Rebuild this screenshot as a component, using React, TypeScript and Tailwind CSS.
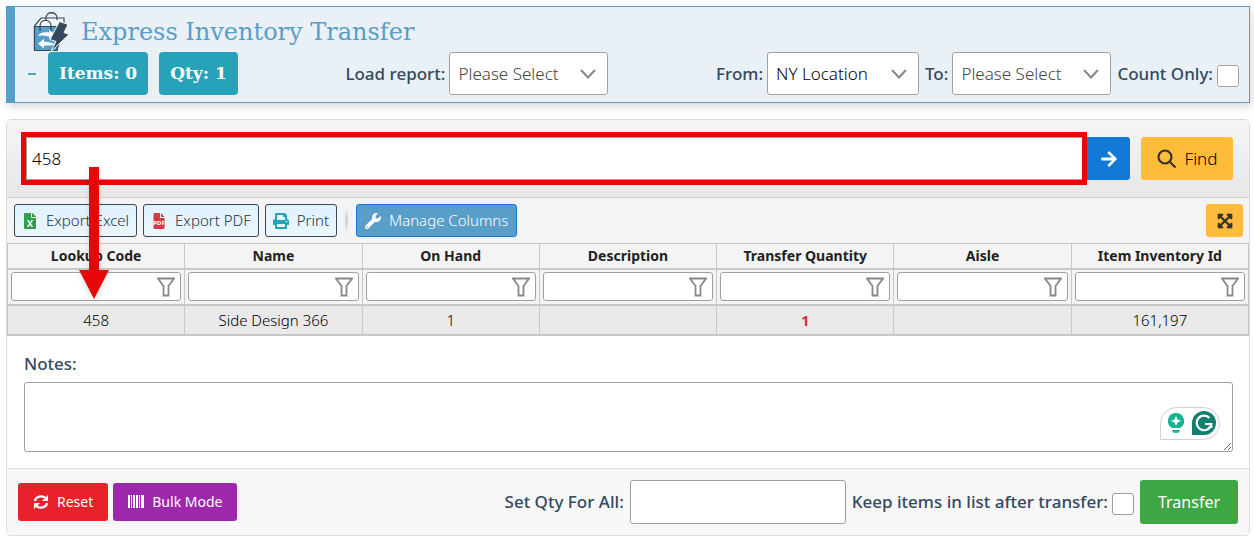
import { useState } from "react";
import type { ReactNode } from "react";
import { FaArrowRight, FaPrint, FaWrench, FaFileExcel, FaExpandArrowsAlt } from "react-icons/fa";

const LABEL = "text-[17px] leading-6 font-medium text-[#34495e]";
const FIELD = "rounded-[3px] border border-[#a0a0a0] bg-white";
const SLAB = "font-['DejaVu_Serif',serif]";

function Select({ id, label, options, width, muted }: { id: string; label: string; options: string[]; width: string; muted?: boolean }) {
  return (
    <div className="flex items-center gap-1">
      <label htmlFor={id} className={LABEL}>{label}</label>
      <div className={`grid items-center ${width}`}>
        <select
          id={id}
          className={`col-start-1 row-start-1 h-[43px] w-full appearance-none pl-2 text-[17px] font-light ${FIELD} ${muted ? "text-[#444]" : "text-black"}`}
        >
          {options.map((o) => (
            <option key={o}>{o}</option>
          ))}
        </select>
        <svg className="pointer-events-none col-start-1 row-start-1 mr-3 h-4 w-4 justify-self-end" viewBox="0 0 16 16" fill="none" stroke="#888" strokeWidth="2">
          <path d="M1 4l7 7.500 7-7.500" />
        </svg>
      </div>
    </div>
  );
}

function Check({ id, label }: { id: string; label: string }) {
  return (
    <div className="flex items-center gap-1">
      <label htmlFor={id} className={LABEL}>{label}</label>
      <input id={id} type="checkbox" className={`mt-1 h-[22px] w-[22px] appearance-none checked:bg-[#1279d6] ${FIELD}`} />
    </div>
  );
}

function ToolButton({ children }: { children: ReactNode }) {
  return (
    <button className="flex h-[33px] items-center gap-2 rounded-[3px] border border-[#34495e] bg-linear-to-b from-[#e0f2ff] to-[#ecf6fd] px-[7px] text-[15px] font-light text-[#1f3347]">
      {children}
    </button>
  );
}

function BagIcon() {
  return (
    <svg className="h-10 w-9" viewBox="0 0 36 40">
      <path d="M1.500 14L8 6H31V16L24 38H1.500Z" fill="#f4f7fa" stroke="#34495e" strokeWidth="1.200" />
      <path d="M1.500 14.500H24V38.500H1.500Z" fill="#579ec9" stroke="#34495e" strokeWidth="1.200" />
      <path d="M13 8V6C13 -1 24 -1 24 6V8M7 19V14C7 6.500 18 6.500 18 14V19" fill="none" stroke="#34495e" strokeWidth="1.300" />
      <path d="M5 24C7 20.500 11 20 16 20.500V17.500L22 22.500 16 27V24.500C11 23.500 8 23 5 24Z" fill="#fff" />
      <path d="M22 32C19 34 16 33.500 11 33.500V36.500L5 31.500 11 27V29.500C16 30 19 31 22 32Z" fill="#fff" />
      <path d="M26.500 9.500L35 12.500 31 20.500 36 22.500 18 39.500 23 29.500 17 27.500Z" fill="#34495e" stroke="#f7f5e6" strokeWidth="1" />
    </svg>
  );
}

function PdfIcon() {
  return (
    <svg className="h-4 w-4" viewBox="0 0 16 16">
      <path d="M2.500 1.500Q2.500 0 4 0H9V5H13.500V14.500Q13.500 16 12 16H4Q2.500 16 2.500 14.500ZM10 0L13.500 4H10Z" fill="#dc3545" />
      <text x="8" y="12" textAnchor="middle" fontSize="6" fontWeight="bold" fill="#fff">PDF</text>
    </svg>
  );
}

function SyncIcon() {
  return (
    <svg className="h-4 w-4" viewBox="0 0 16 16" fill="none">
      <path d="M2 7C2.500 2.500 9.500 0.800 12.800 4.300M14 9C13.500 13.500 6.500 15.200 3.200 11.700" stroke="#fff" strokeWidth="2.300" />
      <path d="M15 1V7H9ZM1 15V9H7Z" fill="#fff" />
    </svg>
  );
}

function BarcodeIcon() {
  return (
    <svg className="h-4 w-4" viewBox="0 0 16 16" fill="#fff" shapeRendering="crispEdges">
      <path d="M0 1H2V14H0ZM3 1H4V14H3ZM5 1H7V14H5ZM8 1H10V14H8ZM11 1H12V14H11ZM13 1H16V14H13Z" />
    </svg>
  );
}

const columns = ["Lookup Code", "Name", "On Hand", "Description", "Transfer Quantity", "Aisle", "Item Inventory Id"];
const row = ["458", "Side Design 366", "1", "", "1", "", "161,197"];

export default function App() {
  const [code, setCode] = useState("458");
  return (
    <main className="min-h-screen bg-white px-1.5 py-1.5 pr-1 font-['Noto_Sans','Open_Sans',sans-serif] text-[#222]">
      <header className="border border-l-9 border-[#579ec9] bg-[#e9f0f6] pr-2.5 pb-[7px] pl-3 shadow-[2px_4px_8px_rgba(0,0,0,0.15)]">
        <div className="flex h-[45px] items-center gap-3 pt-1 pl-1.5">
          <BagIcon />
          <h1 className={`${SLAB} text-2xl text-[#579ec9]`}>Express Inventory Transfer</h1>
        </div>
        <div className="flex h-[43px] items-center justify-between">
          <div className={`flex items-center gap-[11px] text-[17px] font-bold text-white ${SLAB}`}>
            <button aria-label="Collapse" className="flex h-6 w-[10px] items-center justify-center">
              <span className="h-0.5 w-2 bg-[#579ec9]" />
            </button>
            <span className="flex h-[43px] items-center rounded-[4px] bg-[#28a2b8] px-[11px]">Items: 0</span>
            <span className="flex h-[43px] items-center rounded-[4px] bg-[#28a2b8] px-[11px]">Qty: 1</span>
          </div>
          <Select id="report" label="Load report:" options={["Please Select"]} width="w-[159px]" muted />
          <div className="flex items-center gap-1.5">
            <Select id="from" label="From:" options={["NY Location"]} width="w-[152px]" />
            <Select id="to" label="To:" options={["Please Select"]} width="w-[159px]" muted />
            <Check id="count" label="Count Only:" />
          </div>
        </div>
      </header>

      <section className="relative mt-4 overflow-hidden rounded-[5px] border border-[#dcdcdc]">
        <div className="flex items-center bg-linear-to-b from-[#f5f5f5] to-[#e7e7e7] py-[17px] pr-4 pl-[19px]">
          <div className="relative flex-1">
            <input
              aria-label="Lookup code"
              value={code}
              onChange={(e) => setCode(e.target.value)}
              className="block h-[43px] w-full border border-[#a0a0a0] bg-white px-[5px] text-[17px] font-light text-black outline-none"
            />
            <div className="pointer-events-none absolute -inset-[5px] right-0 border-5 border-[#e80707]" />
          </div>
          <button aria-label="Submit" className="flex h-[43px] w-[43px] items-center justify-center rounded-r-[3px] bg-[#1279d6] text-lg text-white">
            <FaArrowRight />
          </button>
          <button className="ml-[11px] flex h-[43px] w-[92px] items-center justify-center gap-2 rounded-[3px] bg-[#ffbb3a] text-[17px] font-light text-black">
            <svg className="h-5 w-5" viewBox="0 0 20 20" fill="none" stroke="#333" strokeWidth="2.200">
              <circle cx="8" cy="8" r="6.500" />
              <path d="M12.700 12.700L18.500 18.500" />
            </svg>
            Find
          </button>
        </div>

        <div className="flex h-[46px] items-center gap-1.5 border-t border-[#d0d0d0] bg-[#f4f4f4] pr-1.5 pl-[7px]">
          <ToolButton><FaFileExcel className="h-4 w-4 text-[#2fa14b]" />Export Excel</ToolButton>
          <ToolButton><PdfIcon />Export PDF</ToolButton>
          <ToolButton><FaPrint className="h-4 w-4 text-[#28a2b8]" />Print</ToolButton>
          <span className="mx-0.5 h-7 w-[3px] bg-linear-to-b from-transparent via-[#cfcfcf] to-transparent" />
          <button className="flex h-[33px] items-center gap-2 rounded-[3px] border border-[#1279d6] bg-[#579ec9] px-2 text-[15px] font-light text-white">
            <FaWrench className="h-4 w-4" />Manage Columns
          </button>
          <button aria-label="Full screen" className="ml-auto flex h-[33px] w-[37px] items-center justify-center rounded-[3px] bg-[#ffbb3a] text-[#333]">
            <FaExpandArrowsAlt stroke="currentColor" strokeWidth="24" />
          </button>
        </div>

        <table className="w-full table-fixed border-collapse border border-[#c8c8c8] text-[15px] leading-5">
          <thead className="bg-[#f4f4f4]">
            <tr className="h-[25px]">
              {columns.map((c) => (
                <th key={c} className="border border-b-2 border-[#c8c8c8] p-0 text-sm font-bold">{c}</th>
              ))}
            </tr>
            <tr className="h-9">
              {columns.map((c) => (
                <td key={c} className="border border-b-2 border-[#c8c8c8] px-[3px] py-0">
                  <div className="grid items-center">
                    <input aria-label={`Filter ${c}`} className={`col-start-1 row-start-1 h-[29px] w-full pr-8 pl-2 outline-none ${FIELD}`} />
                    <svg className="pointer-events-none col-start-1 row-start-1 mr-1.5 h-5 w-[18px] justify-self-end" viewBox="0 0 18 20" fill="none" stroke="#888" strokeWidth="1.800">
                      <path d="M1 1.500H17L11.500 9V18.500H6.500V9Z" />
                    </svg>
                  </div>
                </td>
              ))}
            </tr>
          </thead>
          <tbody className="bg-[#e9e9e9]">
            <tr className="h-[30px]">
              {row.map((v, i) => (
                <td key={columns[i]} className={`border border-b-2 border-[#c8c8c8] p-0 text-center ${i === 4 ? "font-bold text-[#d9303e]" : "font-light text-black"}`}>{v}</td>
              ))}
            </tr>
          </tbody>
        </table>

        <div className="px-4 pt-4 pb-4 pl-[17px]">
          <label htmlFor="notes" className={`mb-1.5 block ${LABEL}`}>Notes:</label>
          <div className="relative">
            <textarea id="notes" className={`block h-[70px] w-full resize-y p-2 outline-none ${FIELD}`} />
            <div className="absolute right-[13px] bottom-3 flex h-[33px] w-[60px] items-center justify-center gap-2 rounded-full rounded-bl-none border border-[#cfd0e0] bg-white pl-1">
              <svg className="h-5 w-4" viewBox="0 0 16 20">
                <path d="M8 0a8 8 0 0 1 4 15H4A8 8 0 0 1 8 0ZM4 17H12C12 19 10.500 20 8 20S4 19 4 17Z" fill="#16b395" />
                <path d="M8 3L9.500 6.500 13 8 9.500 9.500 8 13 6.500 9.500 3 8 6.500 6.500Z" fill="#fff" />
              </svg>
              <svg className="h-6 w-6" viewBox="0 0 24 24">
                <path d="M12 0A12 12 0 1 1 12 24H0V12A12 12 0 0 1 12 0Z" fill="#12806f" />
                <path d="M17.500 7A7.300 7.300 0 1 0 19.300 13H13M19.300 13V17" fill="none" stroke="#fff" strokeWidth="2.200" />
              </svg>
            </div>
          </div>
        </div>

        <footer className="flex h-[67px] items-center justify-between border-t border-[#dcdcdc] bg-[#f7f7f7] px-[11px]">
          <div className="flex gap-[5px] text-sm text-white">
            <button className="flex h-[38px] items-center gap-2 rounded-[3px] bg-[#e8212b] px-[15px]"><SyncIcon />Reset</button>
            <button className="flex h-[38px] items-center gap-2 rounded-[3px] bg-[#9c28ab] px-[15px]"><BarcodeIcon />Bulk Mode</button>
          </div>
          <div className="flex items-center gap-1.5">
            <label htmlFor="qty" className={LABEL}>Set Qty For All:</label>
            <input id="qty" className={`h-11 w-[216px] px-2 outline-none ${FIELD}`} />
            <Check id="keep" label="Keep items in list after transfer:" />
            <button className="h-11 w-[98px] rounded-[3px] bg-[#3ea644] text-base text-white">Transfer</button>
          </div>
        </footer>

        <svg className="pointer-events-none absolute top-[47px] left-[72px] h-[133px] w-[30px] drop-shadow-md" viewBox="0 0 30 133">
          <path d="M10 0H20V103H30L15 132 0 103H10Z" fill="#e80707" />
        </svg>
      </section>
    </main>
  );
}
